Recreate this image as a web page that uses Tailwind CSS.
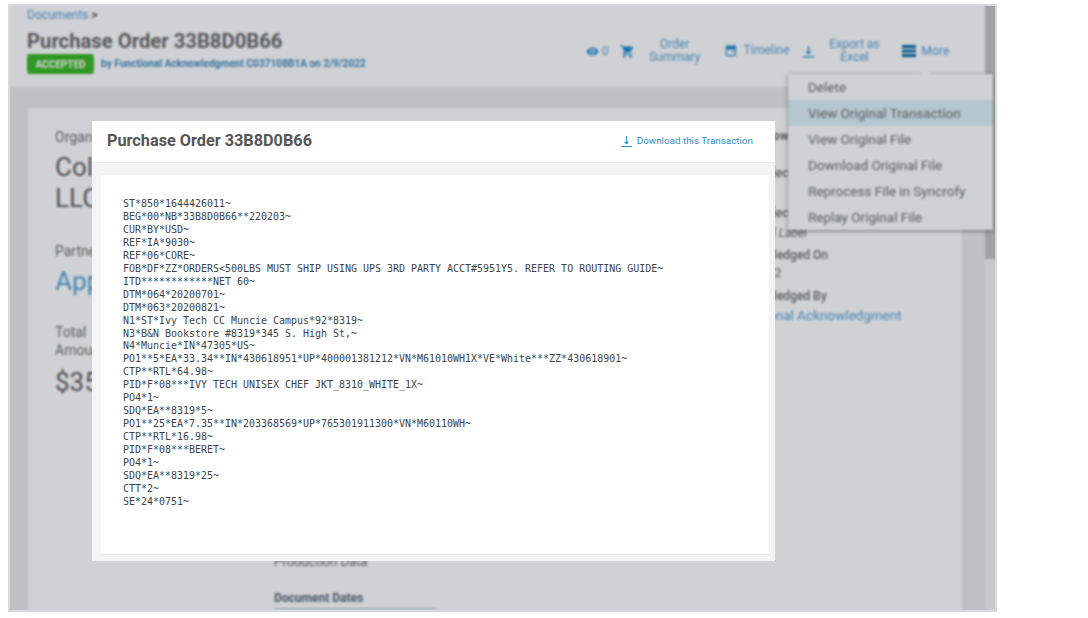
<!DOCTYPE html>
<html lang="en">
  <head>
    <meta charset="UTF-8" />
    <meta name="viewport" content="width=device-width, initial-scale=1.0" />
    <title>Purchase Order 33B8D0B66</title>
    <script src="https://cdn.jsdelivr.net/npm/@tailwindcss/browser@4"></script>
  </head>

  <body class="bg-white font-['Roboto',sans-serif] h-[618px] overflow-hidden">
    <div class="relative ml-2 mt-1 w-[989px] h-[608px] border-2 border-[#d9d9d9] overflow-hidden flex bg-white">
      <!-- page behind the dialog -->
      <div class="w-[975px] h-full flex flex-col">
        <header class="h-[81px] shrink-0 bg-white pl-[17px] pr-[36px] flex justify-between">
          <div>
            <div class="text-[12px] leading-4 text-[#5ba7dc] pt-[1px]">Documents <span class="text-[#666] font-bold">&gt;</span></div>
            <h1 class="text-[20.25px] leading-6 font-bold text-[#6e6e6e] mt-[6px]">Purchase Order 33B8D0B66</h1>
            <div class="flex items-center gap-[7px] mt-[1px]">
              <span class="w-[67px] h-5 rounded-[3px] bg-[#3bba25] text-white text-[10px] font-bold flex items-center justify-center">ACCEPTED</span>
              <span class="text-[10.15px] font-bold text-[#4a95c9]">by Functional Acknowledgment C037108B1A on 2/9/2022</span>
            </div>
          </div>
          <nav class="flex items-center h-[80px] pt-[10px] text-[12px] leading-[13px] text-[#5ba7dc]">
            <svg class="w-[13px] h-[13px] fill-[#1f8fd0]" viewBox="0 0 24 24"><path d="M12 4.5C7 4.5 2.73 7.61 1 12c1.73 4.39 6 7.5 11 7.5s9.27-3.11 11-7.5c-1.73-4.39-6-7.5-11-7.5zM12 17c-2.76 0-5-2.24-5-5s2.24-5 5-5 5 2.24 5 5-2.24 5-5 5zm0-8c-1.66 0-3 1.34-3 3s1.34 3 3 3 3-1.34 3-3-1.34-3-3-3z"/></svg>
            <span class="ml-[3px]">0</span>
            <svg class="ml-[11px] w-[15px] h-[15px] fill-[#1f8fd0]" viewBox="0 0 24 24"><path d="M7 18c-1.1 0-1.99.9-1.99 2S5.9 22 7 22s2-.9 2-2-.9-2-2-2zM1 2v2h2l3.6 7.59-1.35 2.45c-.16.28-.25.61-.25.96 0 1.1.9 2 2 2h12v-2H7.42c-.14 0-.25-.11-.25-.25l.03-.12.9-1.63h7.45c.75 0 1.41-.41 1.75-1.03l3.58-6.49c.08-.14.12-.31.12-.48 0-.55-.45-1-1-1H5.21l-.94-2H1zm16 16c-1.1 0-1.99.9-1.99 2s.89 2 1.99 2 2-.9 2-2-.9-2-2-2z"/></svg>
            <span class="ml-[13px] w-[54px] text-center">Order Summary</span>
            <svg class="ml-[22px] w-[14px] h-[14px] fill-[#2a93d1]" viewBox="0 0 24 24"><path fill-rule="evenodd" d="M19 3h-1V1h-2v2H8V1H6v2H5c-1.1 0-2 .9-2 2v14c0 1.1.9 2 2 2h14c1.1 0 2-.9 2-2V5c0-1.1-.9-2-2-2zM5 10v9h14v-9zm9 2h3v3h-3z"/></svg>
            <span class="ml-[6px] -mt-px">Timeline</span>
            <svg class="ml-[12px] w-[15px] h-[15px] fill-[#1f8fd0]" viewBox="0 0 24 24"><path d="M13 3h-2v9H7.5l4.5 5 4.5-5H13zM3 19.5h18v2H3z"/></svg>
            <span class="ml-[10px] w-[56px] text-center">Export as Excel</span>
            <svg class="ml-[20px] w-[14px] h-[14px] fill-[#0e6da6]" viewBox="0 0 14 14"><path d="M0 1h14v3H0zM0 5.5h14v3H0zM0 10h14v3H0z"/></svg>
            <span class="ml-[5px]">More</span>
          </nav>
        </header>

        <main class="flex-1 bg-[#ebebeb] pt-[21px] pl-[18px] pr-[23px]">
          <div class="h-full bg-white grid grid-cols-[219px_457px_1fr] pl-[27px] overflow-hidden">
            <section class="pt-[20px] text-[#777]">
              <div class="text-[14px] leading-[18px]">Organization</div>
              <div class="text-[26px] leading-[31px] mt-[6px] text-[#666]">Col<br />LLC</div>
              <div class="text-[14px] leading-[18px] mt-[28px]">Partner</div>
              <div class="text-[26px] leading-[31px] mt-[6px] text-[#5ba7dc]">App</div>
              <div class="text-[14px] leading-[18px] mt-[26px]">Total<br />Amount</div>
              <div class="text-[26px] leading-[31px] mt-[8px] text-[#666]">$35</div>
            </section>
            <section class="pt-[446px]">
              <div class="text-[13px] leading-4 text-[#777]">Production Data</div>
              <div class="text-[12px] leading-4 font-bold text-[#60707c] mt-5">Document Dates</div>
              <div class="w-[162px] h-[1px] bg-[#b9c4cc] mt-[2px]"></div>
            </section>
            <section class="pt-[20px] text-[12px] leading-4 text-[#777] font-medium">
              <div class="font-bold">Date Shown</div>
              <div class="mt-[21px]">Date Selected</div>
              <div class="mt-[24px]">Date Selected</div>
              <div class="mt-[4px] italic font-normal">Selected Label</div>
              <div class="mt-[6px]">Acknowledged On</div>
              <div class="mt-[2px] font-normal">2/9/2022</div>
              <div class="mt-[7px]">Acknowledged By</div>
              <div class="mt-[3px] text-[13.5px] font-normal text-[#5ba7dc]">Functional Acknowledgment</div>
            </section>
          </div>
        </main>
      </div>

      <!-- scrollbar -->
      <div class="w-[10px] h-full bg-[#f4f4f4]">
        <div class="h-[253px] bg-[#c5c5c7]"></div>
      </div>

      <!-- more menu -->
      <div class="absolute left-[778px] top-[68px] w-[205px] h-[156px] bg-white text-[13.5px] text-[#777] shadow-[0_1px_4px_rgba(0,0,0,0.45)] z-10">
        <div class="absolute -top-[4px] left-[133px] w-2 h-2 rotate-45 bg-white"></div>
        <div class="relative h-[26px] pl-5 leading-[26px]">Delete</div>
        <div class="relative h-[26px] pl-5 leading-[26px] bg-[#ddf2fa]">View Original Transaction</div>
        <div class="h-[26px] pl-5 leading-[26px]">View Original File</div>
        <div class="h-[26px] pl-5 leading-[26px]">Download Original File</div>
        <div class="h-[26px] pl-5 leading-[26px]">Reprocess File in Syncrofy</div>
        <div class="h-[26px] pl-5 leading-[26px]">Replay Original File</div>
      </div>

      <!-- dim layer -->
      <div class="absolute inset-0 bg-[#000514]/[0.185] backdrop-blur-[1px] z-20"></div>

      <!-- transaction dialog -->
      <div class="absolute left-[82px] top-[115px] w-[683px] h-[440px] bg-[#f4f4f4] z-30 flex flex-col">
        <div class="h-[42px] shrink-0 bg-white border-b border-[#ececec] pl-[15px] pr-[22px] flex items-center justify-between">
          <h2 class="text-[16.25px] font-bold text-[#555]">Purchase Order 33B8D0B66</h2>
          <a class="flex items-center gap-[5px] text-[9.85px] text-[#2f8fca]">
            <svg class="w-[11px] h-[11px] fill-[#1f8fd0]" viewBox="0 0 12 12"><path d="M5.5 0h1v6.2h2.4L6 9.2 3.1 6.2h2.4zM0.5 10.8h11V12H.5z"/></svg>
            Download this Transaction
          </a>
        </div>
        <div class="ml-[9px] mr-[6px] mt-[12px] mb-[7px] flex-1 bg-white shadow-[0_1px_1px_rgba(0,0,0,0.06)] pl-[22px] pt-[23px]">
          <pre class="font-['DejaVu_Sans_Mono',monospace] text-[9.97px] leading-[12.96px] text-[#404448] whitespace-pre">ST*850*1644426011~
BEG*00*NB*33B8D0B66**220203~
CUR*BY*USD~
REF*IA*9030~
REF*06*CORE~
FOB*DF*ZZ*ORDERS&lt;500LBS MUST SHIP USING UPS 3RD PARTY ACCT#5951Y5. REFER TO ROUTING GUIDE~
ITD************NET 60~
DTM*064*20200701~
DTM*063*20200821~
N1*ST*Ivy Tech CC Muncie Campus*92*8319~
N3*B&amp;N Bookstore #8319*345 S. High St,~
N4*Muncie*IN*47305*US~
PO1**5*EA*33.34**IN*430618951*UP*400001381212*VN*M61010WH1X*VE*White***ZZ*430618901~
CTP**RTL*64.98~
PID*F*08***IVY TECH UNISEX CHEF JKT_8310_WHITE_1X~
PO4*1~
SDQ*EA**8319*5~
PO1**25*EA*7.35**IN*203368569*UP*765301911300*VN*M60110WH~
CTP**RTL*16.98~
PID*F*08***BERET~
PO4*1~
SDQ*EA**8319*25~
CTT*2~
SE*24*0751~</pre>
        </div>
      </div>
    </div>
  </body>
</html>
